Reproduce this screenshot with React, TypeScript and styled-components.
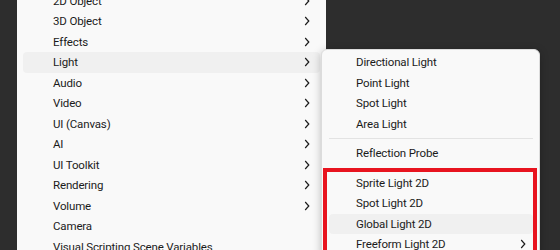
import styled, { createGlobalStyle } from "styled-components";

const GlobalStyle = createGlobalStyle`
  html, body {
    margin: 0;
    padding: 0;
    background: #2d2d2d;
  }
`;

type Item = { label: string; sub?: boolean; active?: boolean; sep?: boolean };

const mainItems: Item[] = [
  { label: "2D Object", sub: true },
  { label: "3D Object", sub: true },
  { label: "Effects", sub: true },
  { label: "Light", sub: true, active: true },
  { label: "Audio", sub: true },
  { label: "Video", sub: true },
  { label: "UI (Canvas)", sub: true },
  { label: "AI", sub: true },
  { label: "UI Toolkit", sub: true },
  { label: "Rendering", sub: true },
  { label: "Volume", sub: true },
  { label: "Camera" },
  { label: "Visual Scripting Scene Variables" },
];

const lightItems: Item[] = [
  { label: "Directional Light" },
  { label: "Point Light" },
  { label: "Spot Light" },
  { label: "Area Light", sep: true },
  { label: "Reflection Probe", sep: true },
  { label: "Sprite Light 2D" },
  { label: "Spot Light 2D" },
  { label: "Global Light 2D", active: true },
  { label: "Freeform Light 2D", sub: true },
];

export default function App() {
  return (
    <Page>
      <GlobalStyle />
      <MainMenu>
        {mainItems.map((item) => (
          <Row key={item.label} $active={item.active} $indent={30} $chevronGap={10}>
            <Label>{item.label}</Label>
            {item.sub && <Chevron />}
          </Row>
        ))}
      </MainMenu>
      <SubMenu>
        {lightItems.map((item) => (
          <div key={item.label}>
            <Row $active={item.active} $indent={27} $chevronGap={7}>
              <Label>{item.label}</Label>
              {item.sub && <Chevron />}
            </Row>
            {item.sep && <Separator />}
          </div>
        ))}
        <Callout />
      </SubMenu>
    </Page>
  );
}

function Chevron() {
  return (
    <ChevronSvg width="6" height="10" viewBox="0 0 6 10">
      <path d="M1.2 1 L4.8 5 L1.2 9" fill="none" stroke="#1b1b1b" strokeWidth="1.2" />
    </ChevronSvg>
  );
}

const Page = styled.div`
  position: relative;
  width: 560px;
  height: 250px;
  overflow: hidden;
  background: #2d2d2d;
  padding-left: 17px;
  box-sizing: border-box;
  display: flex;
  align-items: flex-start;
  font-family: Roboto, "Segoe UI", sans-serif;
  font-size: 11.5px;
  letter-spacing: -0.15px;
  color: #1b1b1b;
`;

const MainMenu = styled.div`
  width: 309px;
  box-sizing: border-box;
  background: #f9f9f9;
  padding: 0 6px;
  margin-top: -9.5px;
  display: flex;
  flex-direction: column;
`;

const Row = styled.div<{ $active?: boolean; $indent: number; $chevronGap: number }>`
  height: 20.5px;
  display: flex;
  align-items: center;
  padding-left: ${(p) => p.$indent}px;
  padding-right: ${(p) => p.$chevronGap}px;
  border-radius: 4px;
  background: ${(p) => (p.$active ? "#f0f0f0" : "transparent")};
`;

const Label = styled.span`
  flex: 1;
  white-space: nowrap;
  line-height: 20px;
`;

const ChevronSvg = styled.svg`
  display: block;
  flex: none;
`;

const SubMenu = styled.div`
  position: absolute;
  left: 321px;
  top: 49px;
  width: 219px;
  box-sizing: border-box;
  background: #f9f9f9;
  border: 1px solid #dcdcdc;
  border-radius: 6px;
  padding: 2px 6px 2px 7px;
  box-shadow: 0 2px 8px rgba(0, 0, 0, 0.25);
`;

const Separator = styled.div`
  height: 1px;
  background: #e3e3e3;
  margin: 4px 0 4px 0;
`;

const Callout = styled.div`
  position: absolute;
  left: 1px;
  top: 118px;
  width: 214px;
  height: 110px;
  box-sizing: border-box;
  border: 4px solid #e8141f;
  pointer-events: none;
`;
